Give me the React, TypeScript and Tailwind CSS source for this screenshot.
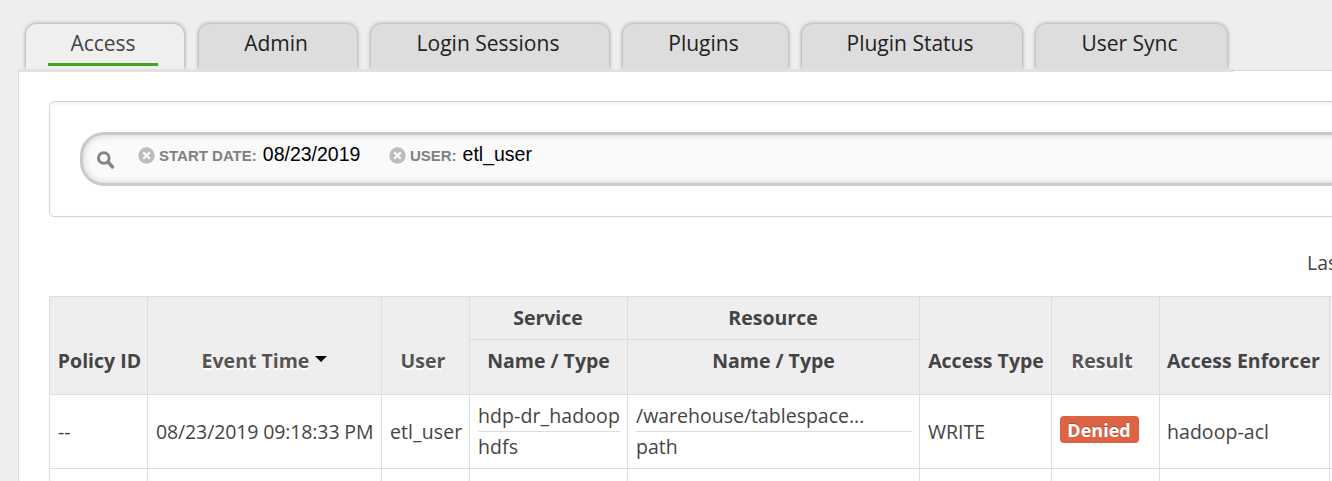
import type { ReactNode } from "react";

const tabs = [
  { label: "Access", width: "w-[158px]", active: true },
  { label: "Admin", width: "w-[158px] ml-[15px]", active: false },
  { label: "Login Sessions", width: "w-[238px] ml-[14px]", active: false },
  { label: "Plugins", width: "w-[165px] ml-[14px]", active: false },
  { label: "Plugin Status", width: "w-[220px] ml-[14px]", active: false },
  { label: "User Sync", width: "w-[191px] ml-[14px]", active: false },
];

function Tab({ label, width, active }: { label: string; width: string; active: boolean }) {
  return (
    <div
      className={`${width} flex h-[45px] shrink-0 flex-col items-center rounded-t-[10px] pt-[4px] pr-[4px] text-[21px] leading-[30px] shadow-[0_0_4px_#888] ${
        active ? "bg-[#efefef] text-[#444]" : "bg-[#dddddd] text-[#222]"
      }`}
    >
      <span className="whitespace-nowrap">{label}</span>
      {active && <span className="mt-[5px] h-[3px] w-[110px] bg-[#3fa51c]" />}
    </div>
  );
}

function RemoveIcon() {
  return (
    <svg width="17" height="17" viewBox="0 0 17 17" className="mt-[2px] shrink-0">
      <circle cx="8.5" cy="8.5" r="8.2" fill="#bdbdbd" />
      <path d="M5.2 5.2l6.6 6.6M11.8 5.2l-6.6 6.6" stroke="#fafafa" strokeWidth="2.3" />
    </svg>
  );
}

function Facet({ name, value }: { name: string; value: string }) {
  return (
    <div className="flex h-[24px] items-center whitespace-nowrap font-['Liberation_Sans',Arial,sans-serif]">
      <RemoveIcon />
      <span className="ml-[4px] pt-[4px] text-[15px] font-bold text-[#808080]">{name}:</span>
      <span className="ml-[6px] text-[19.5px] leading-[24px] text-black">{value}</span>
    </div>
  );
}

function Th({ children, className = "" }: { children?: ReactNode; className?: string }) {
  return (
    <div className={`border-t border-l border-[#dddddd] bg-[#eeeeee] text-center font-bold whitespace-nowrap ${className}`}>
      {children}
    </div>
  );
}

function TallTh({ children, className = "" }: { children?: ReactNode; className?: string }) {
  return <Th className={`row-span-2 flex items-end justify-center pb-[19px] leading-[28px] ${className}`}>{children}</Th>;
}

function Td({ children, className = "" }: { children?: ReactNode; className?: string }) {
  return (
    <div className={`flex items-center border-t border-l border-[#dddddd] bg-white whitespace-nowrap ${className}`}>
      {children}
    </div>
  );
}

function Pair({ top, bottom }: { top: string; bottom: string }) {
  return (
    <div className="flex h-[73px] w-full flex-col pt-[6px] leading-[30px]">
      <span className="h-[31px] border-b border-[#dddddd]">{top}</span>
      <span>{bottom}</span>
    </div>
  );
}

const emboss = "text-[#555] [text-shadow:0_2px_0_#fff]";

export default function App() {
  return (
    <div className="flex h-[481px] w-[1332px] flex-col overflow-hidden bg-[#eeeeee] font-['Open_Sans',sans-serif] text-[19.5px] text-[#444]">
      <nav className="flex h-[69px] shrink-0 overflow-hidden pt-[24px] pl-[26px]">
        {tabs.map((t) => (
          <Tab key={t.label} {...t} />
        ))}
      </nav>
      <div className="flex h-[3px] shrink-0 pl-[18px]">
        <div className="w-[1216px] bg-[#e1e1e1]" />
        <div className="mt-[1px] flex-1 border-t border-[#d6d6d6] bg-white" />
      </div>
      <main className="ml-[18px] w-[1400px] flex-1 border-l border-[#dddddd] bg-white pt-[29px] pl-[30px]">
        <section className="h-[116px] rounded-[5px] border border-[#d5d5d5] pt-[30px] pl-[30px] shadow-[inset_0_2px_4px_rgba(0,0,0,0.06)]">
          <div className="flex h-[54px] rounded-[24px] border-[3px] border-[#cacaca] bg-[#fafafa] pt-[7px] pl-[13px] shadow-[inset_0_0_7px_rgba(0,0,0,0.18)]">
            <svg width="20" height="20" viewBox="0 0 20 20" className="mt-[8px] mr-[22px] shrink-0">
              <circle cx="7.8" cy="8" r="5.3" fill="none" stroke="#858585" strokeWidth="3" />
              <path d="M12 12l4.5 5" stroke="#858585" strokeWidth="3.4" strokeLinecap="round" />
            </svg>
            <div className="flex gap-[28.5px]">
              <Facet name="START DATE" value="08/23/2019" />
              <Facet name="USER" value="etl_user" />
            </div>
          </div>
        </section>
        <div className="flex h-[79px] pt-[31px] pl-[1258px] leading-[30px] whitespace-nowrap">Last Updated Time</div>
        <div className="grid grid-cols-[98px_234px_88px_158px_292px_132px_108px_170px_80px] grid-rows-[43px_55px_74px_60px]">
          <TallTh className="pl-[2px]">Policy ID</TallTh>
          <TallTh>
            <span className={emboss}>Event Time</span>
            <span className="mb-[13px] ml-[6px] border-x-[6px] border-t-[6px] border-x-transparent border-t-black" />
          </TallTh>
          <TallTh className={emboss}><span className="pr-[5px]">User</span></TallTh>
          <Th className="pr-[1px] leading-[42px]">Service</Th>
          <Th className="pr-[1px] leading-[42px]">Resource</Th>
          <TallTh className="pl-[1px]">Access Type</TallTh>
          <TallTh className={emboss}><span className="pr-[7px]">Result</span></TallTh>
          <TallTh className="pr-[2px] tracking-[0.05px]">Access Enforcer</TallTh>
          <TallTh />
          <Th className="leading-[42px]">Name / Type</Th>
          <Th className="leading-[42px]">Name / Type</Th>

          <Td className="pl-[8px]">--</Td>
          <Td className="pl-[8px] tracking-[-0.12px]">08/23/2019 09:18:33 PM</Td>
          <Td className="pl-[8px] tracking-[0.1px]">etl_user</Td>
          <Td className="items-start pr-[7px] pl-[8px] tracking-[0.1px]"><Pair top="hdp-dr_hadoop" bottom="hdfs" /></Td>
          <Td className="items-start pr-[7px] pl-[8px]"><Pair top="/warehouse/tablespace..." bottom="path" /></Td>
          <Td className="pl-[8px]">WRITE</Td>
          <Td className="pl-[8px]">
            <span className="mb-[4px] flex h-[27px] w-[79px] items-center justify-center rounded-[4px] bg-[#dd6344] pt-[1px] pr-[1px] text-[18px] font-bold text-white [text-shadow:0_-1px_0_rgba(0,0,0,0.25)]">
              Denied
            </span>
          </Td>
          <Td className="pl-[7px] tracking-[0.05px]">hadoop-acl</Td>
          <Td />
          {Array.from({ length: 9 }, (_, i) => (
            <Td key={i} />
          ))}
        </div>
      </main>
    </div>
  );
}
